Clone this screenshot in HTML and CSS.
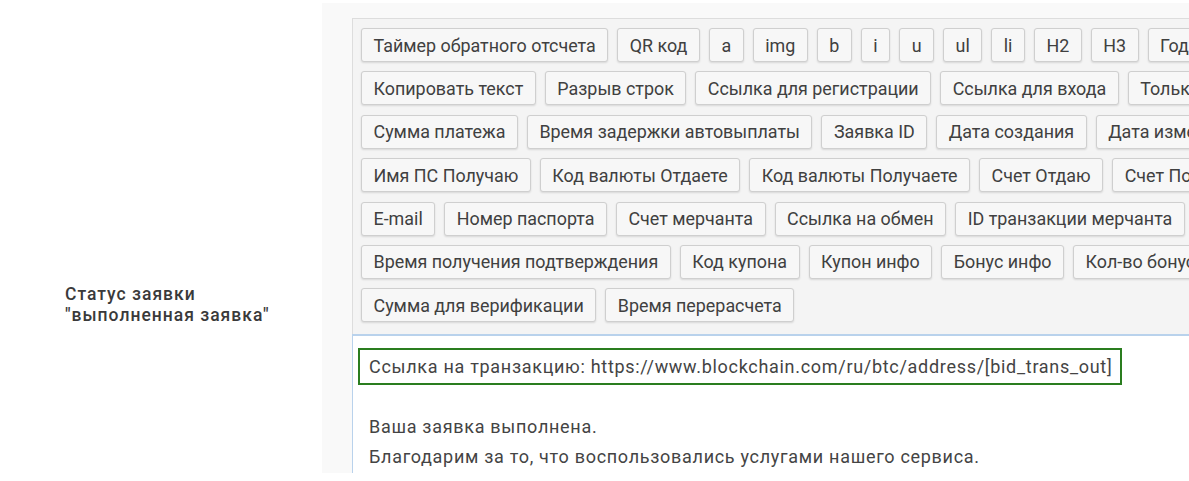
FILE: index.html
```html
<!DOCTYPE html>
<html lang="ru">
<head>
<meta charset="utf-8">
<title>Статус заявки</title>
<link rel="stylesheet" href="styles.css">
</head>
<body>
<div class="page">
  <div class="label-col">
    <div class="label">Статус заявки<br>"выполненная заявка"</div>
  </div>
  <div class="panel">
    <div class="editor-wrap">
      <div class="toolbar">
        <div class="row">
          <span class="btn">Таймер обратного отсчета</span>
          <span class="btn">QR код</span>
          <span class="btn">a</span>
          <span class="btn">img</span>
          <span class="btn">b</span>
          <span class="btn">i</span>
          <span class="btn">u</span>
          <span class="btn">ul</span>
          <span class="btn">li</span>
          <span class="btn">H2</span>
          <span class="btn">H3</span>
          <span class="btn">Год</span>
        </div>
        <div class="row">
          <span class="btn">Копировать текст</span>
          <span class="btn">Разрыв строк</span>
          <span class="btn">Ссылка для регистрации</span>
          <span class="btn">Ссылка для входа</span>
          <span class="btn">Только</span>
        </div>
        <div class="row">
          <span class="btn">Сумма платежа</span>
          <span class="btn">Время задержки автовыплаты</span>
          <span class="btn">Заявка ID</span>
          <span class="btn">Дата создания</span>
          <span class="btn">Дата изменения</span>
        </div>
        <div class="row">
          <span class="btn">Имя ПС Получаю</span>
          <span class="btn">Код валюты Отдаете</span>
          <span class="btn">Код валюты Получаете</span>
          <span class="btn">Счет Отдаю</span>
          <span class="btn">Счет Получаю</span>
        </div>
        <div class="row">
          <span class="btn">E-mail</span>
          <span class="btn">Номер паспорта</span>
          <span class="btn">Счет мерчанта</span>
          <span class="btn">Ссылка на обмен</span>
          <span class="btn">ID транзакции мерчанта</span>
        </div>
        <div class="row">
          <span class="btn">Время получения подтверждения</span>
          <span class="btn">Код купона</span>
          <span class="btn">Купон инфо</span>
          <span class="btn">Бонус инфо</span>
          <span class="btn">Кол-во бонусов</span>
        </div>
        <div class="row">
          <span class="btn">Сумма для верификации</span>
          <span class="btn">Время перерасчета</span>
        </div>
      </div>
      <div class="editor">
        <div class="highlight">Ссылка на транзакцию: https://www.blockchain.com/ru/btc/address/[bid_trans_out]</div>
        <div class="body-text">
          <p class="line blank">&nbsp;</p>
          <p class="line">Ваша заявка выполнена.</p>
          <p class="line">Благодарим за то, что воспользовались услугами нашего сервиса.</p>
        </div>
      </div>
    </div>
  </div>
</div>
</body>
</html>
```

FILE: styles.css
```css
html, body {
  margin: 0;
  padding: 0;
  background: #ffffff;
  overflow: hidden;
}

body {
  font-family: Roboto, "Liberation Sans", Arial, sans-serif;
  color: #444;
}

.page {
  display: flex;
  width: 1189px;
  height: 481px;
}

.label-col {
  width: 322px;
  flex: none;
  padding: 284px 0 0 65px;
  box-sizing: border-box;
}

.label {
  font-size: 17.5px;
  font-weight: 500;
  line-height: 21px;
  letter-spacing: 1px;
  color: #3a3a3a;
}

.panel {
  flex: none;
  width: 1100px;
  height: 470px;
  margin-top: 3px;
  background: #f9f9f9;
  padding: 15px 0 0 30px;
  box-sizing: border-box;
  overflow: hidden;
}

.editor-wrap {
  width: 1100px;
  height: 100%;
  display: flex;
  flex-direction: column;
}

.toolbar {
  background: #f4f4f4;
  border-top: 1px solid #dddddd;
  border-left: 1px solid #dddddd;
  padding: 9px 0 12px 8px;
  display: flex;
  flex-direction: column;
  gap: 9.4px;
}

.row {
  display: flex;
  gap: 9px;
  white-space: nowrap;
}

.btn {
  display: inline-flex;
  align-items: center;
  height: 34px;
  box-sizing: border-box;
  padding: 0 11.5px;
  border: 1px solid #cfcfcf;
  border-radius: 3px;
  background: #f7f7f7;
  box-shadow: 0 1px 2px rgba(0, 0, 0, 0.12);
  font-size: 17.9px;
  color: #404040;
}

.editor {
  flex: 1;
  background: #ffffff;
  border-top: 2px solid #b9d2ec;
  border-left: 1px solid #b9d2ec;
  padding: 12px 0 0 5px;
  font-size: 18px;
  letter-spacing: 0.7px;
}

.highlight {
  width: fit-content;
  height: 37px;
  box-sizing: border-box;
  border: 2px solid #2a7d1f;
  padding: 0 8px 0 9px;
  line-height: 33px;
  color: #444;
}

.body-text {
  padding-left: 11px;
}

.line {
  margin: 0;
  line-height: 30px;
}

.line.blank {
  height: 27px;
}
```
